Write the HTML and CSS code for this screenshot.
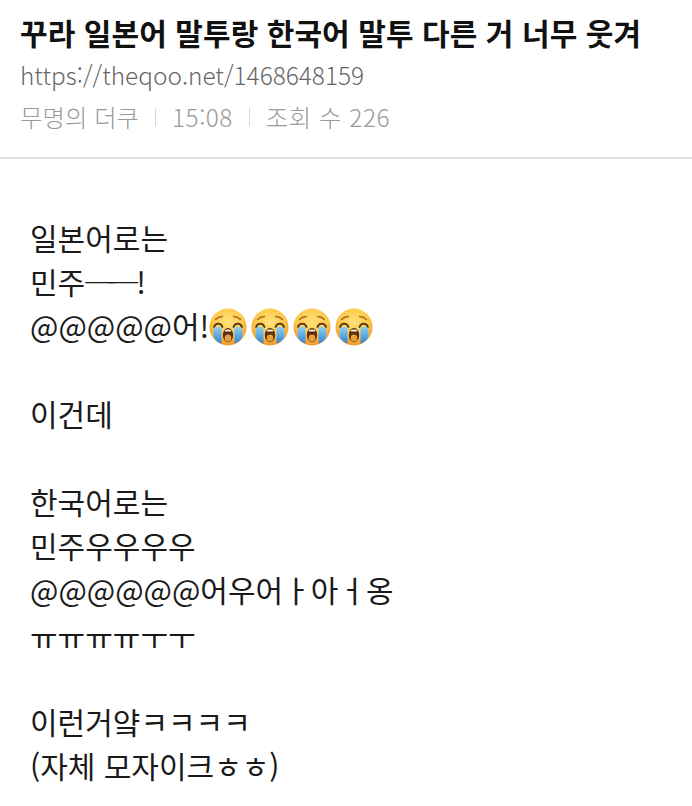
FILE: index.html
```html
<!DOCTYPE html>
<html lang="ko">
<head>
<meta charset="utf-8">
<title>theqoo</title>
<link rel="stylesheet" href="styles.css">
</head>
<body>
<svg class="defs" width="0" height="0" aria-hidden="true">
  <defs>
    <radialGradient id="face" cx="50%" cy="35%" r="65%">
      <stop offset="0%" stop-color="#ffe27a"/>
      <stop offset="60%" stop-color="#fdc94a"/>
      <stop offset="100%" stop-color="#f0952a"/>
    </radialGradient>
    <linearGradient id="tear" x1="0" y1="0" x2="0" y2="1">
      <stop offset="0%" stop-color="#8fd0f2"/>
      <stop offset="100%" stop-color="#2f83d4"/>
    </linearGradient>
    <symbol id="cry" viewBox="0 0 38 38">
      <circle cx="19" cy="19" r="18.5" fill="url(#face)"/>
      <path d="M5.5 19 H12.5 V35.6 C9.5 34.6 7 32.6 5 30 C4.2 26 4.5 22 5.5 19Z" fill="url(#tear)"/>
      <path d="M32.5 19 H25.5 V35.6 C28.5 34.6 31 32.6 33 30 C33.8 26 33.5 22 32.5 19Z" fill="url(#tear)"/>
      <path d="M5 19 C6.5 14.5 12 14.5 13.5 19" fill="none" stroke="#5a3413" stroke-width="1.8" stroke-linecap="round"/>
      <path d="M24.5 19 C26 14.5 31.5 14.5 33 19" fill="none" stroke="#5a3413" stroke-width="1.8" stroke-linecap="round"/>
      <path d="M6.5 11.5 C8.5 9.5 11 8.5 13.5 8.5" fill="none" stroke="#a8691c" stroke-width="1.3" stroke-linecap="round"/>
      <path d="M31.5 11.5 C29.5 9.5 27 8.5 24.5 8.5" fill="none" stroke="#a8691c" stroke-width="1.3" stroke-linecap="round"/>
      <ellipse cx="19" cy="27" rx="5.2" ry="7" fill="#5c2f10"/>
      <ellipse cx="19" cy="30" rx="3.3" ry="3.4" fill="#e8a23c"/>
      <path d="M15.5 22.5 C17 21.3 21 21.3 22.5 22.5 L21.8 23.6 H16.2Z" fill="#fbeedb"/>
    </symbol>
  </defs>
</svg>
<header class="head">
  <h1 class="title">꾸라 일본어 말투랑 한국어 말투 다른 거 너무 웃겨</h1>
  <div class="url">https://theqoo.net/1468648159</div>
  <div class="meta">
    <span>무명의 더쿠</span>
    <i class="sep"></i>
    <span class="wide">15:08</span>
    <i class="sep"></i>
    <span class="wide">조회 수 226</span>
  </div>
</header>
<main class="post">
  <p class="line">일본어로는</p>
  <p class="line">민주<span class="dash">──</span>!</p>
  <p class="line">@@@@@어!<span class="emojis"><svg class="emoji"><use href="#cry"/></svg><svg class="emoji"><use href="#cry"/></svg><svg class="emoji"><use href="#cry"/></svg><svg class="emoji"><use href="#cry"/></svg></span></p>
  <p class="line blank"></p>
  <p class="line">이건데</p>
  <p class="line blank"></p>
  <p class="line">한국어로는</p>
  <p class="line">민주우우우우</p>
  <p class="line">@@@@@@어우어ㅏ아ㅓ옹</p>
  <p class="line low">ㅠㅠㅠㅠㅜㅜ</p>
  <p class="line blank"></p>
  <p class="line">이런거얔ㅋㅋㅋㅋ</p>
  <p class="line">(자체 모자이크ㅎㅎ)</p>
</main>
</body>
</html>
```
FILE: styles.css
```css
* { box-sizing: border-box; }
html, body { margin: 0; padding: 0; background: #fff; }
body {
  width: 692px;
  height: 806px;
  overflow: hidden;
  font-family: "Noto Sans CJK KR", "Noto Sans", sans-serif;
}
.defs { position: absolute; }
.head {
  padding: 12px 20px 0;
  height: 159px;
  border-bottom: 2px solid #dedede;
}
.title {
  margin: 0;
  font-size: 30px;
  font-weight: 700;
  letter-spacing: 0.07px;
  line-height: 40px;
  color: #111;
  white-space: nowrap;
}
.url {
  margin-top: 3px;
  font-size: 24.4px;
  font-weight: 300;
  line-height: 40px;
  color: #666;
}
.meta {
  margin-top: 2px;
  display: flex;
  align-items: center;
  gap: 16px;
  font-size: 24.4px;
  font-weight: 300;
  line-height: 40px;
  color: #9a9a9a;
}
.wide { letter-spacing: 0.5px; }
.sep {
  width: 1px;
  height: 18px;
  background: #d8d8d8;
}
.post { padding: 56px 30px 0; }
.line {
  margin: 0;
  height: 44px;
  font-size: 30px;
  font-weight: 400;
  line-height: 44px;
  color: #1a1a1a;
  white-space: nowrap;
}
.low { padding-top: 3px; }
.dash { letter-spacing: -7px; margin-right: 5px; }
.emojis {
  display: inline-flex;
  gap: 4px;
  vertical-align: -8px;
}
.emoji { width: 38px; height: 38px; display: block; }
```
